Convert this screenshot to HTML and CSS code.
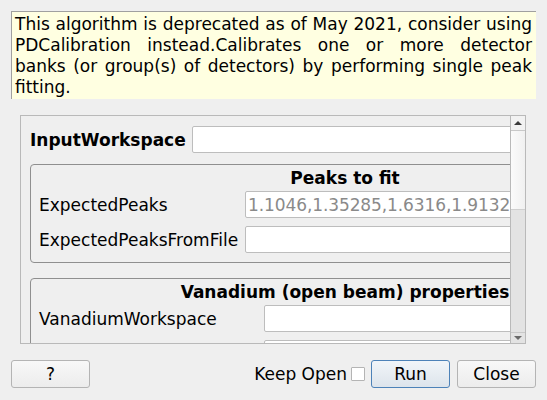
FILE: index.html
```html
<!DOCTYPE html>
<html>
<head>
<meta charset="utf-8">
<link rel="stylesheet" href="styles.css">
</head>
<body>
<div class="dialog">
  <div class="notice">This algorithm is deprecated as of May 2021, consider using PDCalibration instead.Calibrates one or more detector banks (or group(s) of detectors) by performing single peak fitting.</div>
  <div class="scroll">
    <div class="viewport">
      <div class="content">
        <div class="row top-row">
          <span class="label bold">InputWorkspace</span>
          <span class="input w-top"></span>
        </div>
        <div class="group">
          <div class="group-title">Peaks to fit</div>
          <div class="row">
            <span class="label l1">ExpectedPeaks</span>
            <span class="input w1 muted">1.1046,1.35285,1.6316,1.9132</span>
          </div>
          <div class="row">
            <span class="label l1">ExpectedPeaksFromFile</span>
            <span class="input w1"></span>
          </div>
        </div>
        <div class="group g2">
          <div class="group-title">Vanadium (open beam) properties</div>
          <div class="row">
            <span class="label l2">VanadiumWorkspace</span>
            <span class="input w2"></span>
          </div>
          <div class="row">
            <span class="label l2"></span>
            <span class="input w2"></span>
          </div>
        </div>
      </div>
    </div>
    <div class="scrollbar">
      <div class="sb-btn up"><span class="tri-up"></span></div>
      <div class="sb-handle"></div>
      <div class="sb-track"></div>
      <div class="sb-btn down"><span class="tri-down"></span></div>
    </div>
  </div>
  <div class="buttons">
    <button class="btn">?</button>
    <div class="spacer"></div>
    <span class="keep">Keep Open</span>
    <span class="check"></span>
    <button class="btn run">Run</button>
    <button class="btn close">Close</button>
  </div>
</div>
</body>
</html>
```
FILE: styles.css
```css
html, body {
  margin: 0;
  padding: 0;
  background: #efefef;
}
body {
  font-family: "DejaVu Sans", sans-serif;
  font-size: 17px;
  color: #000;
  width: 547px;
  height: 400px;
  overflow: hidden;
}
.dialog {
  padding: 11px 11px 0 11px;
}
.notice {
  background: #ffffe1;
  border-left: 1px solid #a0a0a0;
  border-top: 1px solid #a0a0a0;
  padding: 2px 4px 1px 3px;
  line-height: 21px;
  text-align: justify;
  height: 84px;
  width: 517px;
}
.scroll {
  margin: 16px 10px 0 9px;
  height: 227px;
  border: 1px solid #b9b9b9;
  display: flex;
}
.viewport {
  flex: 1;
  overflow: hidden;
  position: relative;
}
.content {
  width: 640px;
  padding: 10px 0 0 9px;
}
.row {
  display: flex;
  align-items: center;
  height: 27px;
}
.top-row {
  height: 27px;
  margin-bottom: 11px;
}
.label {
  white-space: nowrap;
  flex: none;
}
.bold {
  font-weight: bold;
  width: 162px;
}
.input {
  box-sizing: border-box;
  height: 27px;
  background: #fff;
  border: 1px solid #bdbdbd;
  border-radius: 2px;
  flex: none;
  display: flex;
  align-items: center;
  padding-left: 2px;
  white-space: nowrap;
}
.muted {
  color: #8a8a8a;
  letter-spacing: -0.1px;
}
.w-top { width: 460px; }
.group {
  box-sizing: border-box;
  width: 630px;
  border: 1px solid #8f8f8f;
  border-radius: 4px;
  padding: 3px 0 9px 8px;
}
.group .row + .row {
  margin-top: 8px;
}
.group-title {
  font-weight: bold;
  text-align: center;
  line-height: 20px;
  margin-bottom: 3px;
  padding-right: 8px;
}
.g2 {
  margin-top: 15px;
}
.l1 { width: 206px; }
.w1 { width: 400px; }
.l2 { width: 225px; }
.w2 { width: 380px; }
.scrollbar {
  width: 14px;
  flex: none;
  border-left: 1px solid #b9b9b9;
  display: flex;
  flex-direction: column;
  background: #e3e3e3;
}
.sb-btn {
  height: 14px;
  flex: none;
  display: flex;
  align-items: center;
  justify-content: center;
  background: #f2f2f2;
}
.sb-btn.up {
  border-bottom: 1px solid #c8c8c8;
}
.sb-btn.down {
  height: 10px;
  background: #e3e3e3;
  border-top: 1px solid #c8c8c8;
}
.tri-up {
  width: 0; height: 0;
  border-left: 4px solid transparent;
  border-right: 4px solid transparent;
  border-bottom: 4px solid #3a3a3a;
}
.tri-down {
  width: 0; height: 0;
  border-left: 4px solid transparent;
  border-right: 4px solid transparent;
  border-top: 4px solid #6a6a6a;
}
.sb-handle {
  height: 78px;
  flex: none;
  background: linear-gradient(to right, #fbfbfb, #f0f0f0);
  border-bottom: 1px solid #cfcfcf;
}
.sb-track {
  flex: 1;
}
.buttons {
  display: flex;
  align-items: center;
  margin-top: 16px;
  width: 525px;
}
.spacer { flex: 1; }
.btn {
  box-sizing: border-box;
  width: 79px;
  height: 28px;
  font-family: "DejaVu Sans", sans-serif;
  font-size: 17px;
  color: #000;
  border: 1px solid #b4b4b4;
  border-radius: 3px;
  background: linear-gradient(to bottom, #f8f8f8, #ececec);
  padding: 0;
}
.keep {
  margin-right: 4px;
}
.check {
  box-sizing: border-box;
  width: 14px;
  height: 14px;
  background: #fff;
  border: 1px solid #b4b4b4;
  border-radius: 1px;
  margin-right: 6px;
}
.run {
  border-color: #4d82b8;
  background: linear-gradient(to bottom, #f1f5f9, #dde4eb);
  margin-right: 7px;
}
```
